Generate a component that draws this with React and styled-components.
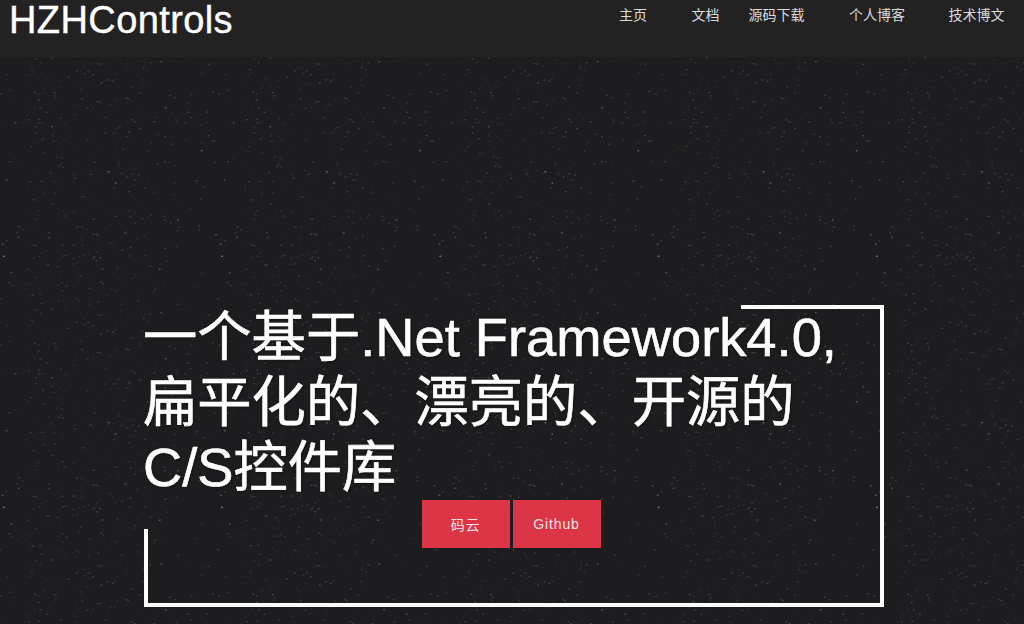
import React from "react";
import styled, { createGlobalStyle } from "styled-components";

const GlobalStyle = createGlobalStyle`
  body { margin: 0; background: #1d1d1f; overflow: hidden; }
  *, *::before, *::after { box-sizing: border-box; }
`;

const Page = styled.div`
  position: relative;
  display: flex;
  flex-direction: column;
  height: 624px;
  overflow: hidden;
  isolation: isolate;
  background: #1d1d1f;
  color: #fff;
  font-family: "Liberation Sans", "Noto Sans CJK SC", sans-serif;
`;

const Texture = styled.svg`
  position: absolute;
  inset: 0;
  width: 100%;
  height: 100%;
  z-index: -1;
`;

const Header = styled.header`
  display: flex;
  justify-content: space-between;
  height: 57px;
  flex: none;
  padding: 0 19.5px 0 9px;
  background: #222;
`;

const Brand = styled.a`
  font-size: 38px;
  line-height: 40px;
  letter-spacing: 0.4px;
  white-space: nowrap;
  -webkit-text-stroke: 0.4px #fff;
`;

const Nav = styled.nav`
  display: flex;
  padding-top: 5px;
`;

const NavLink = styled.a`
  margin-left: ${(p) => p.$gap}px;
  font-size: 14px;
  line-height: 20px;
  color: #dcdcdc;
  white-space: nowrap;
`;

const Hero = styled.main`
  position: relative;
  width: 740px;
  height: 302px;
  margin: 248px 0 0 143.5px;
  &::before {
    content: "";
    position: absolute;
    top: 0;
    right: 0;
    width: 143px;
    height: 302px;
    border: solid #fff;
    border-width: 4px 4px 0 0;
  }
  &::after {
    content: "";
    position: absolute;
    left: 0;
    bottom: 0;
    width: 740px;
    height: 78px;
    border: solid #fff;
    border-width: 0 0 4px 4px;
  }
`;

const Title = styled.h1`
  margin: 0 0 0 -0.5px;
  font-size: 54.3px;
  font-weight: 400;
  line-height: 65px;
  white-space: nowrap;
  -webkit-text-stroke: 0.6px #fff;
  text-shadow: 1px 1px 3px rgba(0, 0, 0, 0.4);
`;

const Line = styled.span`
  display: block;
  height: 65px;
`;

const Actions = styled.div`
  position: relative;
  z-index: 1;
  display: flex;
  gap: 3px;
  padding: 0 0 0 278px;
`;

const Button = styled.a`
  display: flex;
  align-items: center;
  justify-content: center;
  width: 88px;
  height: 48px;
  background: #dc3545;
  color: #f8e4e6;
  font-size: 14px;
  letter-spacing: 0.85px;
`;

/* Bright specks of one texture tile: x, y, opacity in percent. */
const specks = [
  [91,6,25],[43,9,18],[56,20,15],[31,41,18],[165,45,22],[200,45,20],[190,53,18],[214,56,24],[238,24,22],[230,23,15],
  [141,64,25],[239,81,28],[258,72,25],[273,76,28],[281,69,14],[363,72,16],[332,92,22],[366,35,20],[386,20,20],[378,42,12],
  [418,17,34],[560,25,20],[612,56,14],[541,52,16],[40,109,24],[50,114,18],[98,110,24],[102,119,18],[102,127,14],[51,132,18],
  [178,102,16],[182,129,18],[196,156,15],[228,137,24],[236,137,20],[267,146,16],[314,125,20],[320,128,20],[355,111,18],[445,118,22],
  [460,125,20],[510,115,18],[573,107,24],[593,115,22],[620,103,15],[432,155,38],[500,140,22],[500,169,28],[557,168,22],[56,156,22],
  [75,169,24],[21,191,20],[52,190,22],[52,200,18],[43,212,22],[43,230,24],[62,200,16],[91,212,34],[118,187,17],[158,175,14],
  [130,202,12],[252,186,20],[330,191,22],[339,197,25],[398,197,26],[356,218,24],[464,192,18],[467,201,15],[491,200,18],[508,185,18],
  [538,207,18],[554,198,14],[636,200,30],[250,231,15],[275,231,20],[294,215,20],[323,228,22],[314,242,18],[285,218,13],[431,242,24],
  [414,235,14],[560,239,28],[495,253,14],[572,255,24],[579,255,22],[540,284,40],[540,260,12],[452,265,18],[63,249,20],[96,256,18],
  [92,237,15],[127,252,13],[198,253,16],[304,280,20],[379,284,22],[388,260,13],[29,272,20],[65,291,14],[106,303,17],[120,306,16],
  [112,331,22],[118,325,14],[124,333,22],[219,318,18],[291,318,15],[292,327,14],[408,323,18],[431,317,22],[441,318,14],[580,318,16],
  [619,317,25],[87,351,22],[208,354,24],[261,347,50],[316,363,26],[300,351,17],[333,354,24],[351,357,24],[340,371,26],[160,367,22],
  [157,355,14],[26,377,22],[58,376,16],[66,377,15],[99,377,12],[282,381,46],[278,397,18],[322,407,25],[369,397,22],[398,409,14],
  [459,382,16],[525,374,22],[609,371,30],[549,392,18],[537,429,22],[456,416,14],[100,412,18],[65,413,16],[39,431,16],[92,444,26],
  [188,422,19],[180,422,15],[33,432,13],[123,465,18],[130,480,20],[155,467,16],[282,481,24],[323,465,15],[326,483,20],[340,471,13],
  [362,489,18],[340,501,18],[388,477,22],[428,481,20],[430,492,22],[447,502,17],[469,491,36],[472,514,20],[467,524,16],[532,509,22],
  [532,521,18],[508,457,12],[42,490,16],[50,466,14],[216,490,28],[166,514,18],[181,514,14],[3,521,16],[81,530,22],[83,545,26],
  [214,535,20],[224,534,18],[230,538,22],[311,531,40],[347,548,16],[369,541,16],[268,562,15],[301,582,22],[327,574,23],[431,577,26],
  [464,571,20],[583,536,34],[598,565,42],[601,601,64],[609,554,20],[648,513,24],[641,530,20],[646,544,34],[36,568,22],[43,569,22],
  [123,568,20],[156,567,26],[182,571,14],[61,590,14],[53,601,17],[37,605,13],[125,600,20],[133,598,22],[187,597,17],[201,594,14],
  [226,588,22],[218,602,20],[235,605,28],[225,614,27],[215,607,20],[155,607,18],[173,604,13],[80,627,25],[74,627,14],[108,632,20],
  [152,625,15],[166,622,17],[242,639,30],[287,637,17],[324,600,20],[371,599,20],[386,630,26],[414,640,40],[437,615,16],[624,650,34],
  [18,640,18],[177,661,18],[42,665,12],[121,681,18],[238,678,24],[245,684,20],[204,697,22],[135,690,18],[111,688,13],[123,705,13],
  [33,716,22],[55,714,16],[341,656,15],[401,700,26],[397,708,18],[541,654,12],[618,680,20],[626,690,15],[520,695,13],[280,703,15],
  [165,730,18],[60,742,20],[230,738,20],[350,735,18],[470,745,18],[590,728,20],[300,745,17],[110,735,15],
];

/* Fainter grain between the bright specks, from a small fixed-seed generator. */
const grain = (() => {
  let s = 41;
  const next = () => (s = (s * 16807) % 2147483647) / 2147483647;
  return Array.from({ length: 300 }, () => {
    const u = next();
    const x = u < 0.7 ? next() * 390 : next() * 655;
    return [x, next() * 753, 3 + next() * 6];
  });
})();

function Starfield() {
  return (
    <Texture aria-hidden="true">
      <defs>
        <pattern
          id="specks"
          width="218.3"
          height="251"
          patternUnits="userSpaceOnUse"
          patternTransform="translate(240 56)"
        >
          {[...specks, ...grain].map(([x, y, o], i) => (
            <ellipse key={i} cx={x / 3} cy={y / 3} rx="0.9" ry="0.75" fill="#fff" opacity={(o * 0.85) / 100} />
          ))}
        </pattern>
      </defs>
      <rect width="100%" height="100%" fill="url(#specks)" />
    </Texture>
  );
}

const links = [
  ["主页", 0],
  ["文档", 44.5],
  ["源码下载", 29],
  ["个人博客", 44.5],
  ["技术博文", 43.5],
];

export default function App() {
  return (
    <Page>
      <GlobalStyle />
      <Starfield />
      <Header>
        <Brand>HZHControls</Brand>
        <Nav>
          {links.map(([label, gap]) => (
            <NavLink key={label} $gap={gap}>{label}</NavLink>
          ))}
        </Nav>
      </Header>
      <Hero>
        <Title>
          <Line>一个基于.Net Framework4.0,</Line>
          <Line>扁平化的、漂亮的、开源的</Line>
          <Line>C/S控件库</Line>
        </Title>
        <Actions>
          <Button>码云</Button>
          <Button>Github</Button>
        </Actions>
      </Hero>
    </Page>
  );
}
